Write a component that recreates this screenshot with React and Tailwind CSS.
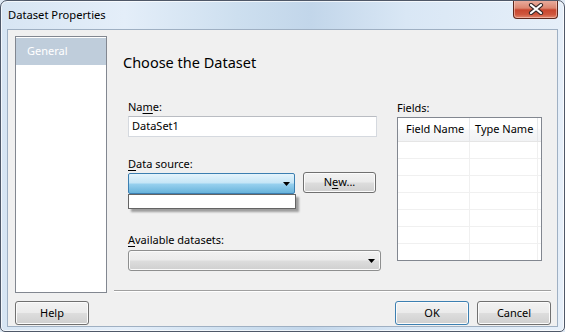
import React from "react";

const FONT = "font-['Noto_Sans','DejaVu_Sans',sans-serif]";
const BTN =
  "flex items-center justify-center rounded-[3px] border text-[11px] text-black bg-[linear-gradient(#f2f2f2_0%,#ebebeb_48%,#dddddd_52%,#cfcfcf_100%)] shadow-[inset_0_0_0_1px_#fbfbfb]";

function Arrow() {
  return (
    <svg width="7" height="4" viewBox="0 0 7 4" className="shrink-0">
      <path d="M0 0h7L3.5 4z" fill="#000" />
    </svg>
  );
}

function CloseGlyph() {
  return (
    <svg width="16" height="12" viewBox="0 0 16 12">
      <path d="M3 2l10 8M13 2L3 10" stroke="#3a2a2a" strokeWidth="4.2" strokeLinecap="round" />
      <path d="M3 2l10 8M13 2L3 10" stroke="#fff" strokeWidth="2.2" strokeLinecap="round" />
    </svg>
  );
}

function Label({ pre, u, post }) {
  return (
    <div className="h-[16px] leading-[16px] text-[11px] text-black">
      {pre}
      <span className="underline underline-offset-[2px]">{u}</span>
      {post}
    </div>
  );
}

export default function App() {
  const rows = [0, 1, 2, 3, 4, 5, 6];

  return (
    <div className={`w-[565px] h-[332px] bg-[#dfe9f4] ${FONT}`}>
      <div className="w-full h-full flex flex-col rounded-t-[7px] rounded-b-[5px] border border-[#4f5868] shadow-[inset_0_0_0_1px_rgba(255,255,255,0.7)] bg-[linear-gradient(90deg,#d7e5f3_0%,#e4eef9_22%,#cddfef_42%,#c2d6ea_55%,#d9e7f5_72%,#e6eff9_100%)] overflow-hidden">
        {/* Title bar */}
        <div className="h-[28px] shrink-0 flex items-start">
          <div className="pl-[7px] pt-[6px] text-[11.2px] leading-[16px] text-black">
            Dataset Properties
          </div>
          <div className="ml-auto mr-[6px] w-[45px] h-[19px] -mt-px flex items-center justify-center rounded-b-[4px] border border-t-0 border-[#5e271c] bg-[linear-gradient(#eab0a2_0%,#dc8670_45%,#c8462f_55%,#cf563d_80%,#e1876e_100%)] shadow-[inset_0_0_0_1px_rgba(255,220,210,0.5)]">
            <CloseGlyph />
          </div>
        </div>

        {/* Client area */}
        <div className="flex-1 mx-[6px] mb-[4px] flex flex-col border border-[#9fb0c3] bg-[#f0f0f0]">
          <div className="flex">
            {/* Navigation */}
            <div className="ml-[7px] mt-[6px] w-[92px] h-[257px] shrink-0 border border-[#828790] bg-white pt-px">
              <div className="h-[27px] bg-[#bfcddb] pl-[11px] flex items-center text-[11px] text-white">
                General
              </div>
            </div>

            {/* Page */}
            <div className="flex-1 ml-[7px] mr-[6px] flex flex-col">
              <div className="pt-[22px] pl-[9px] text-[14.5px] leading-[20px] text-black">
                Choose the Dataset
              </div>

              <div className="mt-[27px] pl-[14px] flex gap-[16px]">
                <div className="w-[253px] flex flex-col">
                  <Label pre="Na" u="m" post="e:" />
                  <div className="mt-[1px] w-[249px] h-[21px] border border-[#d5d9df] border-t-[#b9bcc2] bg-white pl-[3px] flex items-center text-[11px] text-black">
                    DataSet1
                  </div>

                  <div className="mt-[19px]">
                    <Label pre="" u="D" post="ata source:" />
                  </div>
                  <div className="mt-[1px] flex items-start gap-[8px]">
                    <div className="relative">
                      <div className="w-[167px] h-[21px] rounded-[2px] border border-[#3c7fb1] bg-[linear-gradient(#e5f4fc_0%,#c4e5f6_48%,#98d1ef_52%,#68b3db_100%)] flex items-center justify-end pr-[4px]">
                        <Arrow />
                      </div>
                      <div className="absolute left-0 top-full w-[168px] h-[15px] border border-[#646464] bg-white shadow-[3px_3px_2px_rgba(0,0,0,0.35)]" />
                    </div>
                    <div className={`${BTN} -mt-px w-[73px] h-[21px] border-[#707070]`}>
                      N<span className="underline underline-offset-[2px]">e</span>w...
                    </div>
                  </div>

                  <div className="mt-[38px]">
                    <Label pre="" u="A" post="vailable datasets:" />
                  </div>
                  <div className="mt-[2px] w-[253px] h-[21px] rounded-[3px] border border-[#8e8f8f] bg-[linear-gradient(#f2f2f2_0%,#ebebeb_48%,#dddddd_52%,#cfcfcf_100%)] shadow-[inset_0_0_0_1px_#fafafa] flex items-center justify-end pr-[5px]">
                    <Arrow />
                  </div>
                </div>

                <div className="w-[145px] flex flex-col">
                  <div className="mt-[1px] h-[16px] leading-[16px] text-[11px] text-black">Fields:</div>
                  <div className="mt-[1px] h-[144px] border border-[#828790] bg-white overflow-hidden">
                    <div className="flex h-[24px] border-b border-[#e5e5e5] bg-[linear-gradient(#ffffff_0%,#ffffff_45%,#f6f7f8_55%,#f1f2f4_100%)] text-[11px] text-black">
                      <div className="w-[72px] pl-[8px] flex items-center border-r border-[#e5e7ea]">
                        Field Name
                      </div>
                      <div className="w-[68px] pl-[5px] flex items-center border-r border-[#e5e7ea]">
                        Type Name
                      </div>
                    </div>
                    {rows.map((r) => (
                      <div key={r} className="flex h-[17px] border-b border-[#f0f0f0]">
                        <div className="w-[72px] border-r border-[#f0f0f0]" />
                        <div className="w-[68px] border-r border-[#f0f0f0]" />
                      </div>
                    ))}
                  </div>
                </div>
              </div>

              <div className="flex-1" />
              <div className="h-px bg-[#a0a0a0]" />
              <div className="h-px bg-white mb-px" />
            </div>
          </div>

          {/* Footer */}
          <div className="flex items-start pt-[8px] pl-[7px] pr-[6px]">
            <div className={`${BTN} w-[74px] h-[24px] border-[#707070]`}>Help</div>
            <div className="ml-auto flex gap-[8px]">
              <div className={`${BTN} w-[74px] h-[24px] border-[#3c7fb1] shadow-[inset_0_0_0_1px_#bfe3f8]`}>OK</div>
              <div className={`${BTN} w-[74px] h-[24px] border-[#707070]`}>Cancel</div>
            </div>
          </div>
        </div>
      </div>
    </div>
  );
}
